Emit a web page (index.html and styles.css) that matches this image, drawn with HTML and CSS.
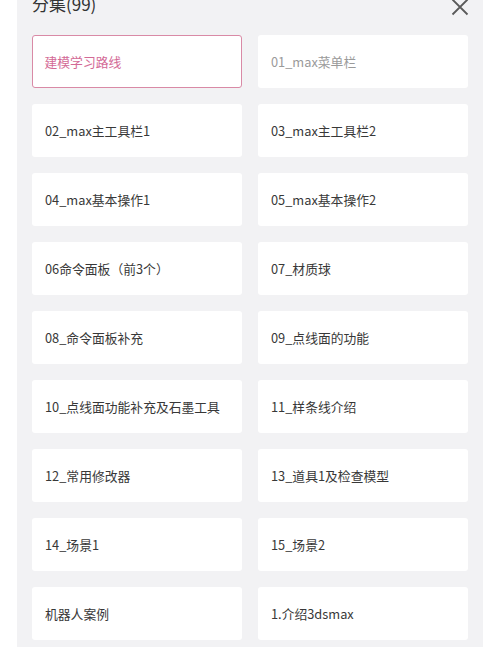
FILE: index.html
```html
<!DOCTYPE html>
<html lang="zh">
<head>
<meta charset="utf-8">
<link rel="stylesheet" href="styles.css">
</head>
<body>
<div class="panel">
  <div class="header">
    <span class="title">分集(99)</span>
    <svg class="close" width="18" height="18" viewBox="0 0 18 18"><path d="M1.5 1.5 L16.5 16.5 M16.5 1.5 L1.5 16.5" stroke="#5a5a5a" stroke-width="1.8" fill="none"/></svg>
  </div>
  <div class="grid">
    <div class="card active">建模学习路线</div>
    <div class="card muted">01_max菜单栏</div>
    <div class="card">02_max主工具栏1</div>
    <div class="card">03_max主工具栏2</div>
    <div class="card">04_max基本操作1</div>
    <div class="card">05_max基本操作2</div>
    <div class="card">06命令面板（前3个）</div>
    <div class="card">07_材质球</div>
    <div class="card">08_命令面板补充</div>
    <div class="card">09_点线面的功能</div>
    <div class="card">10_点线面功能补充及石墨工具</div>
    <div class="card">11_样条线介绍</div>
    <div class="card">12_常用修改器</div>
    <div class="card">13_道具1及检查模型</div>
    <div class="card">14_场景1</div>
    <div class="card">15_场景2</div>
    <div class="card">机器人案例</div>
    <div class="card">1.介绍3dsmax</div>
  </div>
</div>
</body>
</html>
```
FILE: styles.css
```css
html, body {
  margin: 0;
  padding: 0;
  background: #ffffff;
}
body {
  font-family: "Noto Sans CJK SC", "Noto Sans", sans-serif;
  width: 500px;
  height: 652px;
  overflow: hidden;
}
.panel {
  margin: 0 17px;
  background: #f2f2f4;
  height: 647px;
  padding: 0 15px;
  box-sizing: border-box;
}
.header {
  display: flex;
  justify-content: space-between;
  align-items: flex-start;
  height: 35px;
}
.title {
  font-size: 17px;
  color: #333333;
  line-height: 24px;
  margin-top: -8px;
}
.close {
  margin-top: -2px;
  margin-right: -1px;
}
.grid {
  display: grid;
  grid-template-columns: 210px 210px;
  column-gap: 16px;
  row-gap: 16px;
}
.card {
  height: 53px;
  background: #ffffff;
  border-radius: 3px;
  box-sizing: border-box;
  display: flex;
  align-items: center;
  padding-left: 13px;
  font-size: 12.8px;
  color: #383838;
  white-space: nowrap;
}
.card.active {
  border: 1.5px solid #d98aa6;
  color: #d36a96;
  padding-left: 11.5px;
}
.card.muted {
  color: #9a9a9a;
}
```
